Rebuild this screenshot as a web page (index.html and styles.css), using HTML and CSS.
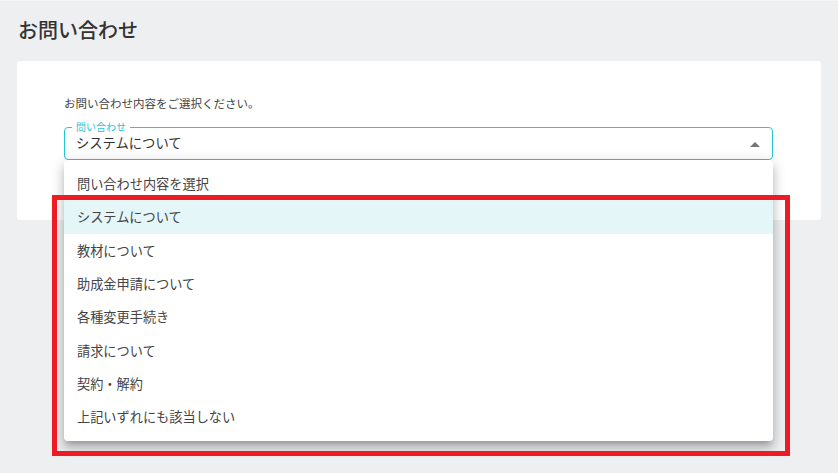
FILE: index.html
```html
<!DOCTYPE html>
<html>
<head>
  <title>お問い合わせ</title>
  <link rel="stylesheet" href="styles.css">
</head>
<body>
  <main class="page">
    <h1 class="page-title">お問い合わせ</h1>

    <section class="card">
      <p class="lead">お問い合わせ内容をご選択ください。</p>

      <div class="select">
        <div class="select-box">
          <span class="select-label">問い合わせ</span>
          <span class="select-value">システムについて</span>
          <svg class="select-arrow" width="10" height="5" viewBox="0 0 10 5">
            <polygon points="0,5 5,0 10,5" fill="#757575"/>
          </svg>
        </div>

        <ul class="menu">
          <li class="menu-item">問い合わせ内容を選択</li>
          <li class="menu-item selected">システムについて</li>
          <li class="menu-item">教材について</li>
          <li class="menu-item">助成金申請について</li>
          <li class="menu-item">各種変更手続き</li>
          <li class="menu-item">請求について</li>
          <li class="menu-item">契約・解約</li>
          <li class="menu-item">上記いずれにも該当しない</li>
        </ul>
      </div>
    </section>

    <!-- annotation frame drawn over the screenshot -->
    <div class="mark"></div>
  </main>
</body>
</html>
```

FILE: styles.css
```css
body {
  margin: 0;
  background-color: #eeeff1;
  font-family: "Noto Sans CJK JP", "Noto Sans", sans-serif;
  color: #333;
}
.page {
  position: relative;
  height: 473px;
  overflow: hidden;
  border-top: 1px solid #f4f5f6;
  box-sizing: border-box;
}
.page-title {
  margin: 0;
  padding: 16px 18px 0;
  height: 44px;
  font-size: 20px;
  line-height: 26px;
  font-weight: 500;
  color: #333;
}
.card {
  margin: 0 17px;
  padding: 33px 48px 60px 47px;
  background-color: white;
  border-radius: 3px;
}
.lead {
  margin: 0 0 15px;
  font-size: 11.5px;
  line-height: 18px;
  color: #444;
}
.select {
  position: relative;
}
.select-box {
  position: relative;
  display: flex;
  align-items: center;
  height: 33px;
  padding: 0 12px 0 11px;
  border: 1px solid #26c6da;
  border-radius: 4px;
  box-sizing: border-box;
}
.select-label {
  position: absolute;
  top: -7px;
  left: 7px;
  padding: 0 4px;
  background-color: white;
  font-size: 10px;
  line-height: 11px;
  color: #26c6da;
}
.select-value {
  flex: 1;
  font-size: 13.3px;
  line-height: 16px;
  padding-bottom: 1px;
  color: #333;
}
.select-arrow {
  margin-top: 1px;
}
.menu {
  position: absolute;
  top: 33px;
  left: 0;
  right: 0;
  margin: 0;
  padding: 7px 0 8px;
  list-style: none;
  background-color: white;
  border-radius: 4px;
  box-shadow: 0 5px 5px -3px rgba(0,0,0,0.2), 0 8px 10px 1px rgba(0,0,0,0.14), 0 3px 14px 2px rgba(0,0,0,0.12);
  z-index: 10;
}
.menu-item {
  height: 33.3px;
  padding-left: 13px;
  display: flex;
  align-items: center;
  font-size: 13.2px;
  color: #444;
}
.menu-item.selected {
  background-color: #e5f6f9;
}
.mark {
  position: absolute;
  left: 52px;
  top: 194px;
  width: 738px;
  height: 261px;
  border: 5px solid #ed1c24;
  box-sizing: border-box;
  z-index: 20;
}
```
